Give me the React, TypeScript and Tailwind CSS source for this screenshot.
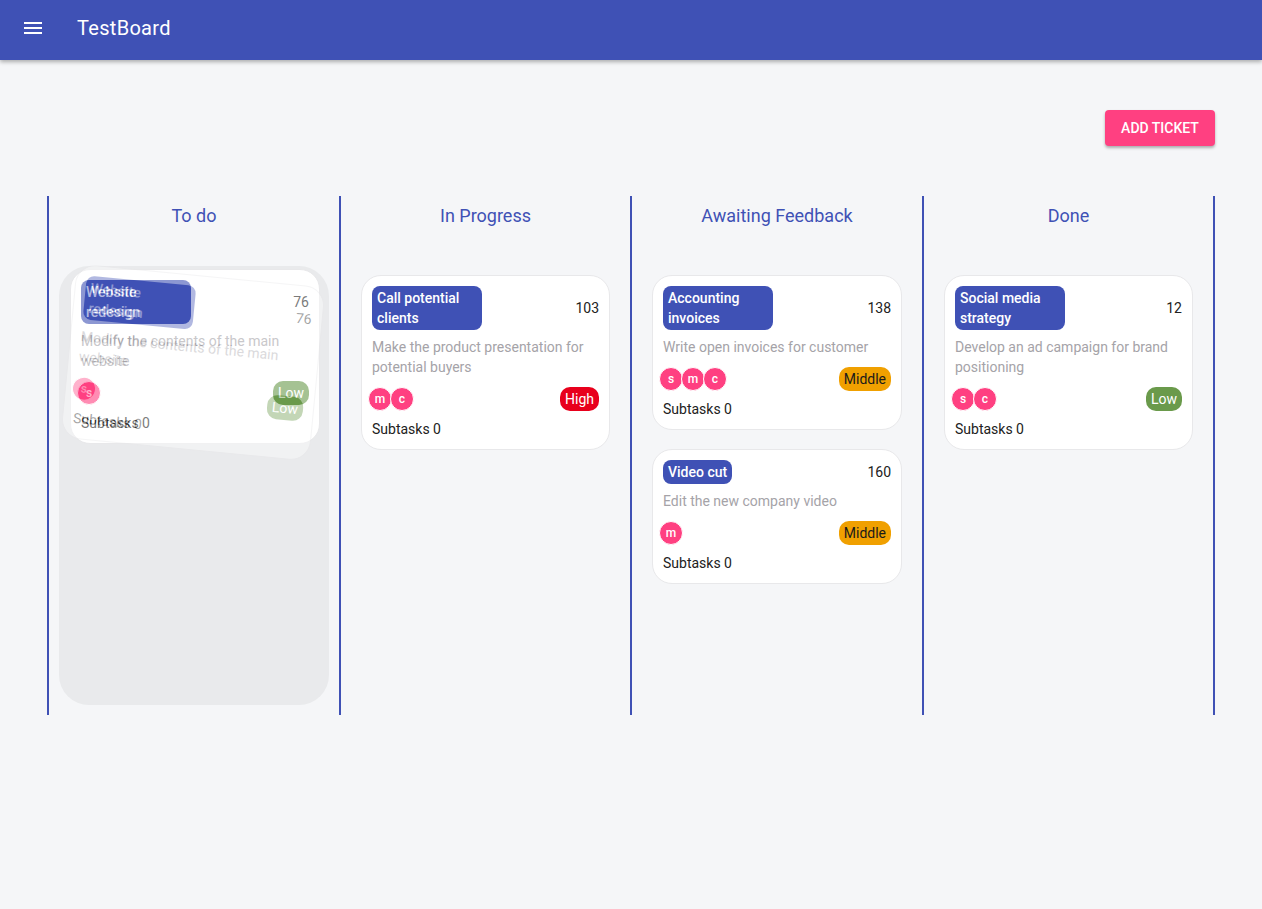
import React from "react";

type Ticket = {
    title: string;
    id: number;
    description: string;
    users: string[];
    priority: "Low" | "Middle" | "High";
};

const priorityClass: Record<Ticket["priority"], string> = {
    Low: "bg-[#6a9a4b] text-white",
    Middle: "bg-[#f0a000] text-[#1a1a1a]",
    High: "bg-[#e8001c] text-white",
};

const columns: { name: string; tickets: Ticket[] }[] = [
    { name: "To do", tickets: [] },
    {
        name: "In Progress",
        tickets: [
            { title: "Call potential clients", id: 103, description: "Make the product presentation for potential buyers", users: ["m", "c"], priority: "High" },
        ],
    },
    {
        name: "Awaiting Feedback",
        tickets: [
            { title: "Accounting invoices", id: 138, description: "Write open invoices for customer", users: ["s", "m", "c"], priority: "Middle" },
            { title: "Video cut", id: 160, description: "Edit the new company video", users: ["m"], priority: "Middle" },
        ],
    },
    {
        name: "Done",
        tickets: [
            { title: "Social media strategy", id: 12, description: "Develop an ad campaign for brand positioning", users: ["s", "c"], priority: "Low" },
        ],
    },
];

// ticket being dragged in the "To do" column
const dragged: Ticket = {
    title: "Website redesign",
    id: 76,
    description: "Modify the contents of the main website",
    users: ["s"],
    priority: "Low",
};

function TicketCard({ ticket, className = "w-full" }: { ticket: Ticket; className?: string }) {
    return (
        <div className={"bg-white border border-[#e8e8ea] rounded-[20px] pt-[10px] pb-[10px] px-[10px] flex flex-col " + className}>
            <div className="flex items-center justify-between">
                <span className="max-w-[110px] bg-[#3f51b5] text-white text-[14px] leading-[20px] font-medium rounded-[8px] px-[5px] py-[2px]">
                    {ticket.title}
                </span>
                <span className="text-[14px] text-[#212121]">{ticket.id}</span>
            </div>
            <p className="mt-[7px] text-[14px] leading-[20px] text-[#a5a3a8]">{ticket.description}</p>
            <div className="mt-[10px] flex items-center justify-between">
                <div className="flex -ml-[4px]">
                    {ticket.users.map((u, i) => (
                        <span
                            key={i}
                            className={"w-[24px] h-[24px] rounded-full bg-[#ff4081] border border-white text-white text-[12px] font-medium flex items-center justify-center " + (i > 0 ? "-ml-[2px]" : "")}
                        >
                            {u}
                        </span>
                    ))}
                </div>
                <span className={"h-[24px] px-[5px] rounded-[10px] text-[14px] leading-[24px] " + priorityClass[ticket.priority]}>
                    {ticket.priority}
                </span>
            </div>
            <div className="mt-[8px] text-[14px] leading-[20px] text-[#212121]">Subtasks 0</div>
        </div>
    );
}

export default function App() {
    return (
        <div className="min-h-[909px] bg-[#f5f6f8]" style={{ fontFamily: "Roboto, 'Liberation Sans', sans-serif" }}>
            <header className="h-[60px] bg-[#3f51b5] flex items-center shadow-[0_2px_4px_rgba(0,0,0,0.3)] relative z-10">
                <svg className="ml-[21px] mb-[4px]" width="24" height="24" viewBox="0 0 24 24" fill="white">
                    <path d="M3 18h18v-2H3v2zm0-5h18v-2H3v2zm0-7v2h18V6H3z" />
                </svg>
                <h1 className="ml-[32px] mb-[4px] text-white text-[20px] font-normal tracking-[0.3px]">TestBoard</h1>
            </header>

            <main className="px-[47px]">
                <div className="flex justify-end pt-[50px]">
                    <button className="h-[36px] w-[110px] bg-[#ff4081] text-white text-[14px] font-medium uppercase rounded-[4px] shadow-[0_2px_3px_rgba(0,0,0,0.3)]">
                        Add ticket
                    </button>
                </div>

                <div className="mt-[50px] grid grid-cols-[292px_291px_292px_293px]">
                    {columns.map((col, ci) => (
                        <div key={col.name} className={"border-l-2 border-[#3f51b5] flex flex-col " + (ci === 3 ? "border-r-2" : "")}>
                            <h2 className="pt-[6px] h-[70px] text-center text-[18px] leading-[28px] text-[#3f51b5]">{col.name}</h2>
                            <div
                                className={
                                    "relative mx-[10px] mb-[10px] h-[439px] rounded-[30px] px-[10px] pt-[9px] flex flex-col gap-[19px] " +
                                    (ci === 0 ? "bg-[#e9eaec]" : "")
                                }
                            >
                                {col.tickets.map((t) => (
                                    <TicketCard key={t.id} ticket={t} />
                                ))}
                                {ci === 0 && (
                                    <>
                                        <TicketCard ticket={dragged} className="w-[250px] absolute left-[11px] top-[3px]" />
                                        <TicketCard
                                            ticket={dragged}
                                            className="w-[250px] absolute left-[11px] top-[3px] opacity-40 translate-x-[-2px] translate-y-[6px] rotate-[5.5deg]"
                                        />
                                    </>
                                )}
                            </div>
                        </div>
                    ))}
                </div>
            </main>
        </div>
    );
}
